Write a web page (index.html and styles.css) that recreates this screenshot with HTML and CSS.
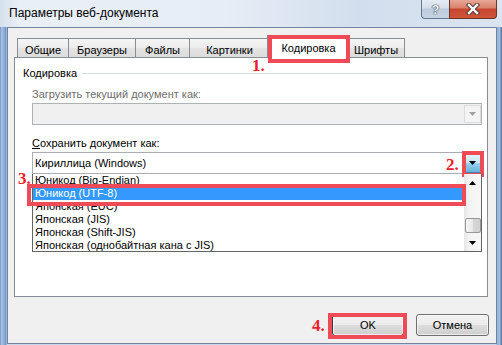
FILE: index.html
```html
<!DOCTYPE html>
<html lang="ru">

<head>
    <meta charset="UTF-8">
    <title>Параметры веб-документа</title>
    <link rel="stylesheet" href="styles.css">
</head>

<body>
    <div class="window">
        <!-- Заголовок окна -->
        <div class="titlebar">
            <span class="title">Параметры веб-документа</span>
            <div class="caption-buttons">
                <span class="cap-btn help">?</span>
                <span class="cap-btn close">
                    <svg width="16" height="12" viewBox="0 0 16 12">
                        <path d="M4 2 L12 10 M12 2 L4 10" stroke="#5b3a33" stroke-width="4.4" stroke-linecap="square" fill="none"/>
                        <path d="M4 2 L12 10 M12 2 L4 10" stroke="#ffffff" stroke-width="2.4" stroke-linecap="square" fill="none"/>
                    </svg>
                </span>
            </div>
        </div>

        <div class="client">
            <!-- Вкладки -->
            <div class="tabs">
                <div class="tab tab-general">Общие</div>
                <div class="tab tab-browsers">Браузеры</div>
                <div class="tab tab-files">Файлы</div>
                <div class="tab tab-pictures">Картинки</div>
                <div class="tab tab-encoding active">
                    Кодировка
                    <span class="mark mark-tab"></span>
                    <span class="step step-1">1.</span>
                </div>
                <div class="tab tab-fonts">Шрифты</div>
            </div>

            <!-- Содержимое вкладки «Кодировка» -->
            <div class="panel">
                <div class="group-head">
                    <span>Кодировка</span>
                    <div class="group-line"></div>
                </div>

                <div class="field-label disabled">Загрузить текущий документ как:</div>
                <div class="combo combo-disabled">
                    <span class="combo-arrow">
                        <svg width="7" height="4" viewBox="0 0 7 4"><path d="M0 0 H7 L3.5 4 Z" fill="#a0a0a0"/></svg>
                    </span>
                </div>

                <div class="field-label save-label"><u>С</u>охранить документ как:</div>
                <div class="combo combo-open">
                    <span class="combo-text">Кириллица (Windows)</span>
                    <span class="combo-arrow pressed">
                        <svg width="7" height="4" viewBox="0 0 7 4"><path d="M0 0 H7 L3.5 4 Z" fill="#000"/></svg>
                        <span class="mark mark-arrow"></span>
                        <span class="step step-2">2.</span>
                    </span>
                </div>

                <div class="dropdown">
                    <ul class="options">
                        <li>Юникод (Big-Endian)</li>
                        <li class="selected">Юникод (UTF-8)</li>
                        <li>Японская (EUC)</li>
                        <li>Японская (JIS)</li>
                        <li>Японская (Shift-JIS)</li>
                        <li>Японская (однобайтная кана с JIS)</li>
                    </ul>
                    <div class="scrollbar">
                        <span class="sb-btn">
                            <svg width="7" height="4" viewBox="0 0 7 4"><path d="M0 4 H7 L3.5 0 Z" fill="#000"/></svg>
                        </span>
                        <span class="sb-track"></span>
                        <span class="sb-thumb"></span>
                        <span class="sb-btn">
                            <svg width="7" height="4" viewBox="0 0 7 4"><path d="M0 0 H7 L3.5 4 Z" fill="#000"/></svg>
                        </span>
                    </div>
                    <span class="mark mark-item"></span>
                    <span class="step step-3">3.</span>
                </div>
            </div>

            <!-- Кнопки диалога -->
            <div class="dialog-buttons">
                <button class="btn btn-ok">OK
                    <span class="mark mark-ok"></span>
                    <span class="step step-4">4.</span>
                </button>
                <button class="btn btn-cancel">Отмена</button>
            </div>
        </div>
    </div>
</body>

</html>
```

FILE: styles.css
```css
/* Общие настройки */
* {
    box-sizing: border-box;
}

body {
    margin: 0;
    font-family: "Liberation Sans", Arial, sans-serif;
    font-size: 11px;
    color: #000;
    background: #c8d8ec;
}

/* Рамка окна */
.window {
    width: 502px;
    height: 345px;
    display: flex;
    flex-direction: column;
    overflow: hidden;
    background: linear-gradient(to right, #5d7ea8 0, #a8c3e3 1px, #8db0da 4px, #6b94c7 6px, #c8d8ec 7px,
        #c8d8ec 496px, #8db0da 497px, #a5c1e2 500px, #5d7ea8 501px);
}

.titlebar {
    height: 27px;
    display: flex;
    align-items: flex-start;
    font-size: 12px;
    background: linear-gradient(to right, #d6e1ee, #e9eff6 4%, #e6edf6 45%, #d2deed 72%, #dbe5f1);
}

.title {
    padding: 6px 0 0 9px;
    line-height: 15px;
}

.caption-buttons {
    display: flex;
    margin-left: auto;
    margin-right: 5px;
}

.cap-btn {
    height: 19px;
    display: flex;
    align-items: center;
    justify-content: center;
    border: 1px solid #65788f;
    border-top: none;
}

.help {
    width: 28px;
    border-right: none;
    border-radius: 0 0 0 4px;
    color: #fff;
    font-weight: bold;
    font-size: 13px;
    text-shadow: 0 0 1px #2b3a4d, 0 0 1px #2b3a4d, 0 0 1px #2b3a4d;
    background: linear-gradient(#e6ecf4, #d4deea 45%, #bccadc 50%, #c6d3e3);
}

.close {
    width: 48px;
    border-color: #6a3328;
    border-radius: 0 0 4px 0;
    background: linear-gradient(#e7a797, #d9806a 45%, #c7452f 50%, #cf563a);
}

/* Клиентская область */
.client {
    flex: 1;
    margin: 0 5px 1px 7px;
    border: 1px solid #75849a;
    background: #f0f0f0;
    display: flex;
    flex-direction: column;
}

/* Вкладки */
.tabs {
    display: flex;
    align-items: flex-end;
    height: 19px;
    margin: 10px 0 0 9px;
}

.tab {
    height: 19px;
    margin-right: -1px;
    padding-top: 3px;
    line-height: 16px;
    text-align: center;
    border: 1px solid #898c95;
    border-bottom: none;
    background: linear-gradient(#f5f5f5, #ececec 50%, #e3e3e3 51%, #dcdcdc);
}

.tab-general { width: 52px; }
.tab-browsers { width: 68px; }
.tab-files { width: 55px; }
.tab-pictures { width: 81px; }
.tab-fonts { width: 58px; }

.tab.active {
    width: 83px;
    height: 23px;
    margin: 0 -3px -1px -2px;
    padding-top: 4px;
    position: relative;
    z-index: 1;
    background: #fff;
}

/* Панель вкладки */
.panel {
    margin-left: 6px;
    width: 474px;
    height: 240px;
    border: 1px solid #898c95;
    background: #fff;
}

.group-head {
    display: flex;
    align-items: center;
    margin: 8px 5px 0 8px;
    line-height: 15px;
}

.group-line {
    flex: 1;
    height: 1px;
    margin-left: 5px;
    background: #d5dfe5;
}

.field-label {
    margin: 6px 0 0 17px;
    line-height: 15px;
}

.field-label.disabled {
    color: #6d6d6d;
}

.save-label {
    margin-top: 11px;
}

/* Выпадающие списки */
.combo {
    display: flex;
    margin: 1px 5px 0 17px;
    height: 22px;
    border: 1px solid #abadb3;
    background: #fff;
}

.combo-disabled {
    border-color: #adb2b5;
    background: #f0f0f0;
}

.combo-text {
    flex: 1;
    padding-left: 2px;
    line-height: 20px;
}

.combo-arrow {
    width: 17px;
    margin-left: auto;
    display: flex;
    align-items: center;
    justify-content: center;
    position: relative;
}

.combo-disabled .combo-arrow {
    margin: 1px 0 1px auto;
    border: 1px solid #dcdcdc;
    background: #f4f4f4;
}

.combo-arrow.pressed {
    border: 1px solid #3c7fb1;
    background: linear-gradient(#e5f4fc, #c4e5f6 50%, #98d1ef 51%, #68b3db);
}

.dropdown {
    display: flex;
    position: relative;
    margin: 0 5px 0 17px;
    height: 78px;
    border: 1px solid #646464;
    border-top: none;
}

.options {
    flex: 1;
    margin: 0;
    padding: 0;
    list-style: none;
    overflow: hidden;
}

.options li {
    height: 13px;
    line-height: 13px;
    padding-left: 2px;
    white-space: nowrap;
}

.options li.selected {
    background: #3399ff;
    color: #fff;
}

/* Полоса прокрутки */
.scrollbar {
    width: 17px;
    display: flex;
    flex-direction: column;
    background: linear-gradient(to right, #e6e6e6, #f3f3f3 30%, #f7f7f7);
}

.sb-btn {
    height: 17px;
    display: flex;
    align-items: center;
    justify-content: center;
}

.sb-track {
    flex: 1;
}

.sb-thumb {
    height: 15px;
    margin: 0 0 1px 1px;
    border: 1px solid #979797;
    border-radius: 2px;
    background: linear-gradient(to right, #f5f5f5, #e8e8e8 50%, #d6d6d6 51%, #d0d0d0);
}

/* Кнопки диалога */
.dialog-buttons {
    display: flex;
    justify-content: flex-end;
    gap: 12px;
    margin: 17px 7px 0 0;
}

.btn {
    position: relative;
    height: 22px;
    padding: 0;
    font-family: inherit;
    font-size: 11px;
    font-weight: normal;
    color: #000;
    border: 1px solid #707070;
    border-radius: 3px;
    box-shadow: inset 0 0 0 1px rgba(255, 255, 255, 0.6);
    background: linear-gradient(#f2f2f2, #ebebeb 50%, #dddddd 51%, #cfcfcf);
}

.btn-ok {
    width: 72px;
    border-color: #3c3c3c;
}

.btn-cancel {
    width: 73px;
}

/* Красные пометки шагов */
.mark {
    position: absolute;
    border: 4px solid #ef4b57;
}

.step {
    position: absolute;
    font: bold 17px/17px "Liberation Serif", serif;
    color: #f01d2a;
    white-space: nowrap;
}

.mark-tab {
    left: 0;
    top: -1px;
    width: 82px;
    height: 28px;
}

.step-1 {
    left: -16px;
    top: 21px;
}

.mark-arrow {
    left: -3px;
    top: -3px;
    width: 22px;
    height: 26px;
}

.step-2 {
    left: -19px;
    top: 2px;
}

.mark-item {
    left: -6px;
    top: 10px;
    width: 439px;
    height: 22px;
}

.step-3 {
    left: -15px;
    top: -4px;
}

.mark-ok {
    left: -5px;
    top: -2px;
    width: 79px;
    height: 26px;
}

.step-4 {
    left: -21px;
    top: 2px;
}
```
